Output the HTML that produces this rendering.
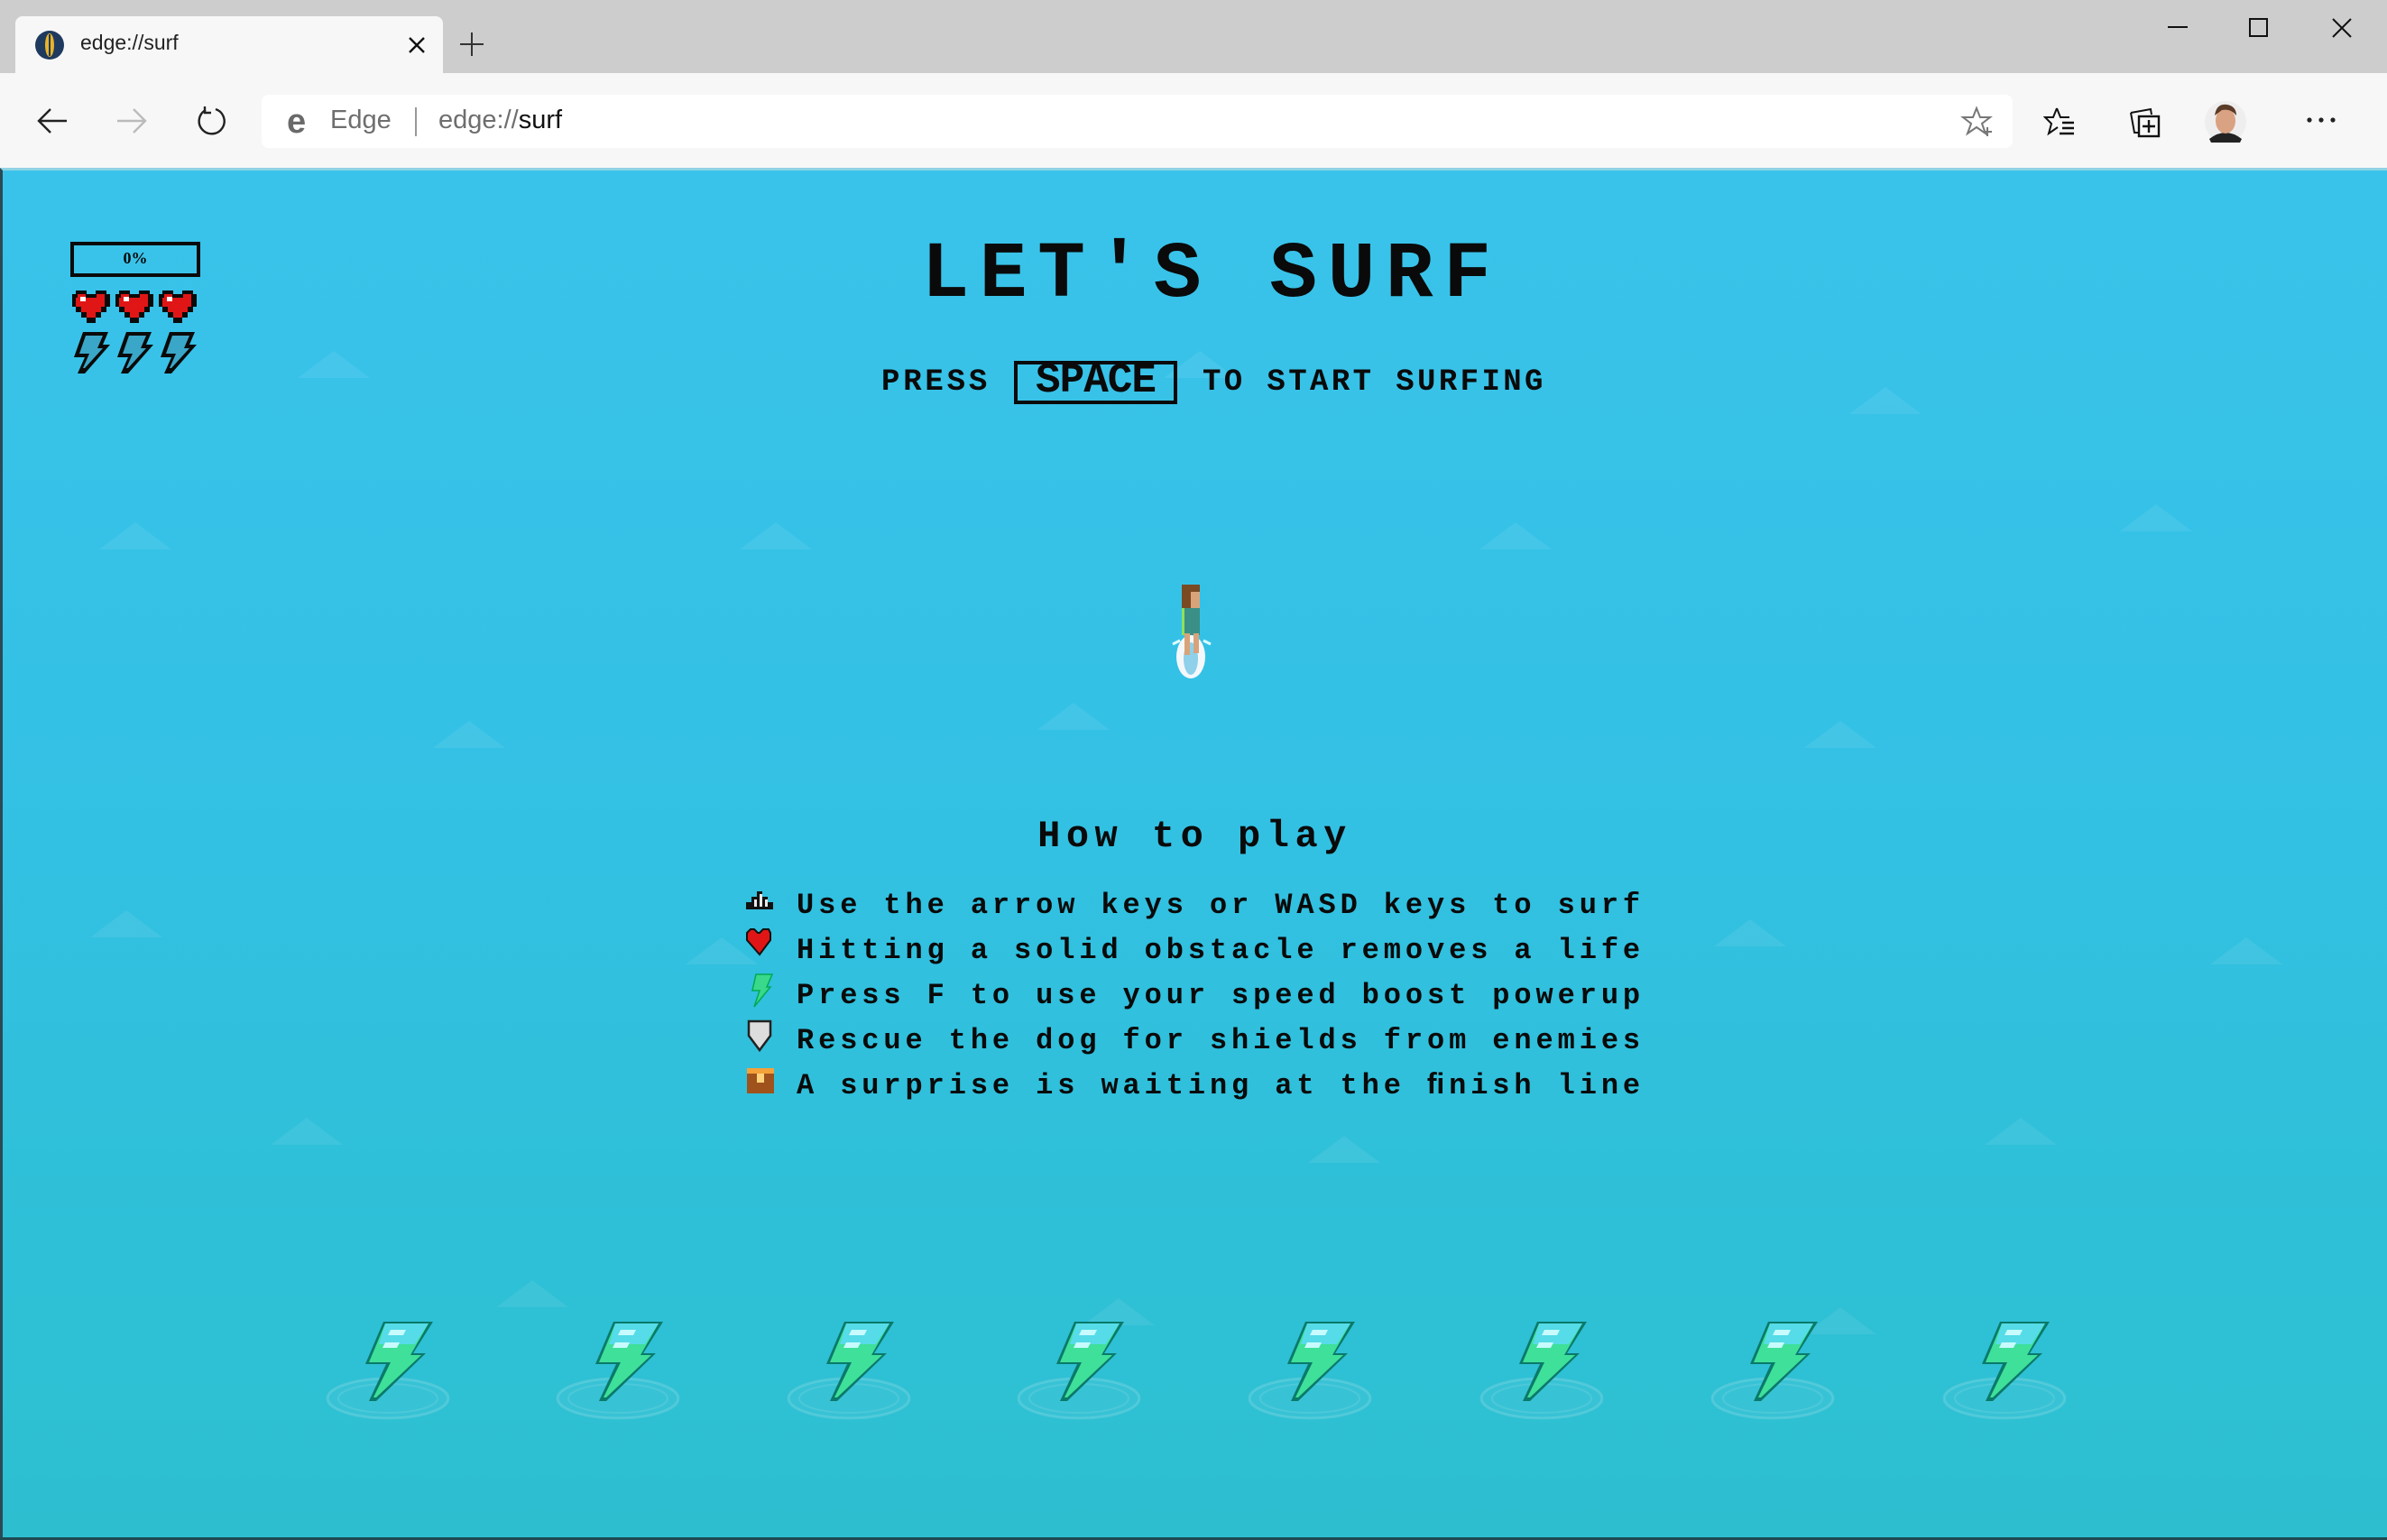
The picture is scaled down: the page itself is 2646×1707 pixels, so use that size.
<!DOCTYPE html>
<html><head><meta charset="utf-8"><style>
*{margin:0;padding:0;box-sizing:border-box}
body{width:2646px;height:1707px;overflow:hidden;background:#f7f7f7;font-family:"Liberation Sans",sans-serif;position:relative}
.abs{position:absolute}
.px{font-family:"Liberation Mono",monospace;font-weight:bold;color:#0a0a0a;white-space:pre}
</style></head><body>
<!-- tab strip -->
<div class="abs" style="left:0;top:0;width:2646px;height:81px;background:#cdcdcd"></div>
<div class="abs" style="left:17px;top:18px;width:474px;height:66px;background:#f7f7f7;border-radius:8px 8px 0 0"></div>
<svg class="abs" style="left:38px;top:33px" width="34" height="34"><circle cx="17" cy="17" r="16" fill="#1f3a5f"/><ellipse cx="17" cy="17" rx="5" ry="13" fill="#e8b32a"/><line x1="17" y1="5" x2="17" y2="29" stroke="#1f3a5f" stroke-width="2"/></svg>
<div class="abs" style="left:89px;top:34px;font-size:23px;color:#222">edge://surf</div>
<svg class="abs" style="left:452px;top:40px" width="20" height="20"><path d="M2 2L18 18M18 2L2 18" stroke="#111" stroke-width="2.4"/></svg>
<svg class="abs" style="left:508px;top:34px" width="30" height="30"><path d="M15 2V28M2 15H28" stroke="#333" stroke-width="2"/></svg>
<svg class="abs" style="left:2403px;top:20px" width="230" height="24"><path d="M0 10H22" stroke="#111" stroke-width="2"/><rect x="91" y="1" width="19" height="19" fill="none" stroke="#111" stroke-width="2"/><path d="M183 1L203 21M203 1L183 21" stroke="#111" stroke-width="2"/></svg>
<!-- toolbar -->
<svg class="abs" style="left:40px;top:118px" width="36" height="32"><path d="M34 16H4M16 3L3 16L16 29" fill="none" stroke="#222" stroke-width="2.4"/></svg>
<svg class="abs" style="left:128px;top:118px" width="36" height="32"><path d="M2 16H32M20 3L33 16L20 29" fill="none" stroke="#bbb" stroke-width="2.4"/></svg>
<svg class="abs" style="left:216px;top:116px" width="36" height="36"><path d="M23 5A14 14 0 1 1 12 6" fill="none" stroke="#222" stroke-width="2.4"/><path d="M11 2V9H18" fill="none" stroke="#222" stroke-width="2.4"/></svg>
<div class="abs" style="left:290px;top:105px;width:1941px;height:59px;background:#fff;border-radius:8px"></div>
<div class="abs" style="left:318px;top:114px;font-size:38px;font-weight:bold;color:#6a6a6a">e</div>
<div class="abs" style="left:366px;top:117px;font-size:29px;color:#6e6e6e">Edge</div>
<div class="abs" style="left:460px;top:119px;width:2px;height:32px;background:#999"></div>
<div class="abs" style="left:486px;top:117px;font-size:29px;color:#6e6e6e">edge://<span style="color:#111">surf</span></div>
<svg class="abs" style="left:2173px;top:117px" width="40" height="36"><path d="M18 3L22 13L33 13L24 20L28 31L18 24L8 31L12 20L3 13L14 13Z" fill="none" stroke="#777" stroke-width="2"/><path d="M30 24V34M25 29H35" stroke="#777" stroke-width="2"/></svg>
<svg class="abs" style="left:2265px;top:117px" width="40" height="36"><path d="M15 3L19 13L29 13" fill="none" stroke="#111" stroke-width="2"/><path d="M15 3L11 13L2 13L9 20L6 31L16 24" fill="none" stroke="#111" stroke-width="2"/><path d="M21 19H34M21 25H34M18 31H34" stroke="#111" stroke-width="2.4"/></svg>
<svg class="abs" style="left:2358px;top:117px" width="40" height="36"><path d="M4 8L26 4L27 10" fill="none" stroke="#111" stroke-width="2"/><path d="M4 8L8 30H13" fill="none" stroke="#111" stroke-width="2"/><rect x="13" y="12" width="22" height="22" fill="#f7f7f7" stroke="#111" stroke-width="2.4"/><path d="M24 16V30M17 23H31" stroke="#111" stroke-width="2.4"/></svg>
<svg class="abs" style="left:2443px;top:110px" width="48" height="50"><circle cx="24" cy="25" r="23" fill="#eee"/><path d="M6 44Q24 30 42 44L40 48H8Z" fill="#222"/><ellipse cx="24" cy="24" rx="11" ry="14" fill="#d9a282"/><path d="M12 18Q14 4 26 6Q36 8 36 18Q30 10 20 12Z" fill="#5a3b28"/></svg>
<svg class="abs" style="left:2556px;top:128px" width="36" height="10"><circle cx="4" cy="5" r="2.6" fill="#222"/><circle cx="17" cy="5" r="2.6" fill="#222"/><circle cx="30" cy="5" r="2.6" fill="#222"/></svg>
<!-- content -->
<div class="abs" style="left:0;top:186px;width:2646px;height:1521px;background:linear-gradient(#3ac3ea 0%,#34c1e6 40%,#2ec0d6 80%,#2dbfd0 100%);border-left:3px solid #2b4a55;border-top:3px solid #8fd3e4"></div>
<div class="abs" style="left:0;top:1704px;width:2646px;height:3px;background:#1e4a52"></div>
<svg class="abs" style="left:0;top:189px" width="2646" height="1515" opacity="0.07">
<g fill="#ffffff">
<path d="M330 230L370 200L410 230Z"/><path d="M1290 230L1330 200L1370 230Z"/><path d="M2050 270L2090 240L2130 270Z"/>
<path d="M110 420L150 390L190 420Z"/><path d="M820 420L860 390L900 420Z"/><path d="M1640 420L1680 390L1720 420Z"/><path d="M2350 400L2390 370L2430 400Z"/>
<path d="M480 640L520 610L560 640Z"/><path d="M1150 620L1190 590L1230 620Z"/><path d="M2000 640L2040 610L2080 640Z"/>
<path d="M100 850L140 820L180 850Z"/><path d="M760 880L800 850L840 880Z"/><path d="M1900 860L1940 830L1980 860Z"/><path d="M2450 880L2490 850L2530 880Z"/>
<path d="M300 1080L340 1050L380 1080Z"/><path d="M1450 1100L1490 1070L1530 1100Z"/><path d="M2200 1080L2240 1050L2280 1080Z"/>
<path d="M550 1260L590 1230L630 1260Z"/><path d="M1200 1280L1240 1250L1280 1280Z"/><path d="M2000 1290L2040 1260L2080 1290Z"/>
</g></svg>
<!-- HUD -->
<div class="abs" style="left:78px;top:268px;width:144px;height:39px;border:4px solid #0a0a0a"></div>
<div class="abs px" style="left:78px;top:276px;width:144px;text-align:center;font-size:18px;font-family:'Liberation Serif',serif">0%</div>
<svg class="abs" style="left:78px;top:318px" width="146" height="44">
<defs><g id="h"><path d="M4 4H16V8H26V4H38V8H42V22H38V28H32V34H26V40H16V34H10V28H4V22H0V8H4Z" fill="#0a0a0a"/><path d="M6 8H15V12H27V8H36V22H32V28H26V34H16V28H10V22H4V12H6Z" fill="#e01616"/><rect x="9" y="11" width="6" height="5" fill="#fff"/></g></defs>
<use href="#h" x="2"/><use href="#h" x="50"/><use href="#h" x="98"/></svg>
<svg class="abs" style="left:80px;top:368px" width="146" height="48">
<defs><g id="b"><path d="M12 0H40L34 14H42L14 46H6L14 28H2Z" fill="#0a0a0a"/><path d="M15 4H34L28 18H34L14 40H12L19 24H8Z" fill="#3aa6c8"/></g></defs>
<use href="#b" x="0"/><use href="#b" x="48"/><use href="#b" x="96"/></svg>
<!-- Title -->
<div class="abs px" style="left:0;width:2646px;top:256px;text-align:center;font-size:88px;letter-spacing:11.5px;padding-left:40px">LET'S SURF</div>
<div class="abs px" style="left:977px;top:405px;font-size:34px;letter-spacing:3.8px">PRESS</div>
<div class="abs" style="left:1124px;top:400px;width:181px;height:48px;border:4px solid #0a0a0a"></div>
<div class="abs px" style="left:1124px;width:181px;top:396px;text-align:center;font-size:46px;letter-spacing:-1px">SPACE</div>
<div class="abs px" style="left:1333px;top:405px;font-size:34px;letter-spacing:3.4px">TO START SURFING</div>
<!-- surfer -->
<svg class="abs" style="left:1290px;top:644px" width="64" height="110">
<ellipse cx="30" cy="84" rx="16" ry="24" fill="#f4f8fb"/><ellipse cx="30" cy="86" rx="8" ry="18" fill="#8fd0ea"/>
<path d="M10 70L18 66M44 66L52 70" stroke="#dff" stroke-width="3"/>
<rect x="22" y="30" width="18" height="30" fill="#3a8f86"/><rect x="20" y="30" width="3" height="30" fill="#8fe05a"/>
<rect x="23" y="58" width="6" height="24" fill="#d9a37a"/><rect x="33" y="58" width="6" height="22" fill="#d9a37a"/>
<rect x="24" y="12" width="16" height="18" fill="#d9a37a"/><path d="M20 4H40V12H30V30H20Z" fill="#7a4a22"/>
</svg>
<!-- How to play -->
<div class="abs px" style="left:0;width:2646px;top:903px;text-align:center;font-size:42px;letter-spacing:6.5px;padding-left:3px">How to play</div>
<div class="abs px" style="left:883px;top:979px;font-size:32px;letter-spacing:4.9px;line-height:50px">Use the arrow keys or WASD keys to surf
Hitting a solid obstacle removes a life
Press F to use your speed boost powerup
Rescue the dog for shields from enemies
A surprise is waiting at the ﬁnish line</div>
<svg class="abs" style="left:826px;top:986px" width="38" height="230">
<path d="M13 2H19V8H25V14H31V22H1V14H7V8H13Z" fill="#111"/><path d="M10 11H13V19H10ZM16 5H19V19H16ZM22 11H25V19H22Z" fill="#e8e8e8"/>
<path d="M2 48L6 44H10L14 48H16L20 44H26L28 48V56L16 72L2 56Z" fill="#e01616" stroke="#111" stroke-width="2"/>
<path d="M12 94H30L24 108H28L10 130L16 112H8Z" fill="#3ad88a" stroke="#0a5" stroke-width="1.5"/>
<path d="M4 146H28V162L16 178L4 162Z" fill="#ddd" stroke="#222" stroke-width="2.5"/>
<rect x="2" y="198" width="30" height="28" fill="#a0521c"/><rect x="2" y="198" width="30" height="6" fill="#f4a13a"/><rect x="13" y="204" width="8" height="10" fill="#ffd27a"/>
</svg>
<!-- bottom bolts -->
<svg class="abs" style="left:0;top:1450px" width="2646" height="140">
<defs><g id="B">
<ellipse cx="25" cy="100" rx="67" ry="22" fill="#ffffff" fill-opacity="0.05" stroke="#ffffff" stroke-opacity="0.15" stroke-width="3"/>
<ellipse cx="25" cy="100" rx="55" ry="16" fill="none" stroke="#ffffff" stroke-opacity="0.1" stroke-width="2"/>
<path d="M20 15H75L53 50H67L12 103H4L23 62H0Z" fill="#0a7a6a"/>
<path d="M22 17H70L50 52H62L12 99H9L28 60H4Z" fill="#3fe09a"/>
<path d="M22 17H70L55 40H15Z" fill="#55dce8"/>
<path d="M28 24H45L42 30H25ZM22 38H38L35 44H19Z" fill="#c8fbff"/>
</g></defs>
<use href="#B" x="405"/><use href="#B" x="660"/><use href="#B" x="916"/><use href="#B" x="1171"/><use href="#B" x="1427"/><use href="#B" x="1684"/><use href="#B" x="1940"/><use href="#B" x="2197"/>
</svg>
</body></html>
